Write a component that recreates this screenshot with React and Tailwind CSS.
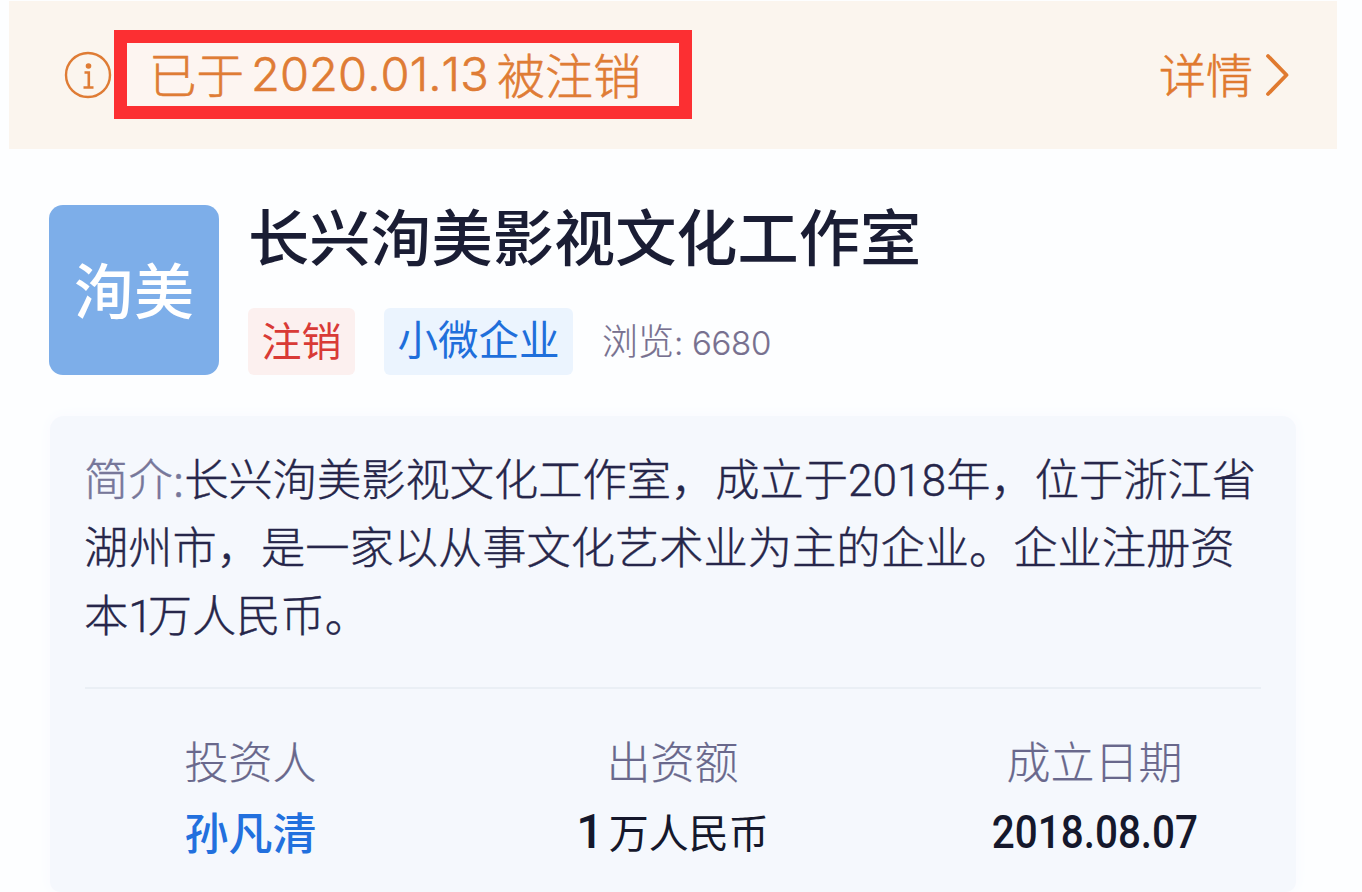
const InfoIcon = () => (
  <svg viewBox="0 0 48 48" fill="none" className="w-12 h-12 shrink-0 text-[#df7c35]">
    <circle cx="24" cy="24" r="22" stroke="currentColor" strokeWidth="2.4" />
    <circle cx="24.5" cy="15" r="2.8" fill="currentColor" />
    <path d="M20.5 21.5h4.3v15M19.5 36.5h10" stroke="currentColor" strokeWidth="2.6" />
  </svg>
);

const Banner = () => (
  <div className="mt-px ml-[9px] w-[1328px] h-[148px] bg-[#fbf5ee] flex items-center pl-[55px] pr-[46px]">
    <InfoIcon />
    <div className="ml-[2px] -mt-px w-[578px] h-[89px] border-[13px] border-[#fc2f32] bg-[#fdf5f1] flex items-center pl-[22px] text-[#df7c35] text-[49px] font-light whitespace-nowrap [-webkit-text-stroke:0.6px]">
      <span className="pb-[4px] text-[47.5px]">已于</span>
      <span className="ml-[7px] font-[Inter] text-[47px] tracking-[0.1px] [font-kerning:none] inline-block w-[246px]">
        2020.01.13
      </span>
      <span className="pb-[4px] text-[48px]">被注销</span>
    </div>
    <div className="ml-auto flex items-center text-[#e07a2f]">
      <span className="pb-[3px] text-[47px] font-light [-webkit-text-stroke:0.6px]">详情</span>
      <svg viewBox="0 0 26 44" fill="none" className="w-[26px] h-11 ml-3">
        <path d="M3 3l18.5 19L3 41" stroke="currentColor" strokeWidth="3.8" strokeLinecap="round" strokeLinejoin="round" />
      </svg>
    </div>
  </div>
);

const Header = () => (
  <div className="flex mt-14 ml-[49px]">
    <div className="w-[170px] h-[170px] pb-[4px] rounded-[14px] bg-[#7daee9] text-white text-[60px] font-medium flex items-center justify-center leading-none">
      洵美
    </div>
    <div className="ml-[29px] -mt-[3px]">
      <h1 className="text-[61.2px] leading-[66px] font-medium text-[#1a1d34] whitespace-nowrap">
        长兴洵美影视文化工作室
      </h1>
      <div className="mt-[40px] flex items-center h-[67px]">
        <span className="h-[67px] w-[107px] pb-[6px] rounded-md bg-[#fcf0ef] text-[#d93a36] text-[40px] flex items-center justify-center">
          注销
        </span>
        <span className="ml-[29px] h-[67px] w-[189px] pb-[6px] rounded-md bg-[#ebf4fe] text-[#1f6fdb] text-[40.5px] flex items-center justify-center">
          小微企业
        </span>
        <span className="ml-[29px] pb-[3px] text-[#77708f] text-[36px] font-light whitespace-nowrap [-webkit-text-stroke:0.2px]">
          浏览<span className="font-[Inter] text-[33px] tracking-[-0.3px]">: 6680</span>
        </span>
      </div>
    </div>
  </div>
);

const columns = [
  {
    label: '投资人',
    value: <span className="relative top-[2px] text-[#2270de] font-medium">孙凡清</span>,
  },
  {
    label: '出资额',
    value: (
      <span className="text-[#15182c] text-[40px]">
        <span className="font-[Roboto] font-medium text-[48px] leading-none mr-[5px]">1</span>万人民币
      </span>
    ),
  },
  {
    label: '成立日期',
    value: (
      <span className="inline-block scale-x-[0.86] font-[Roboto] font-medium text-[47px] text-[#15182c]">
        2018.08.07
      </span>
    ),
  },
];

const Summary = () => (
  <div className="mt-[41px] ml-[50px] w-[1246px] h-[476px] rounded-t-[14px] rounded-b-[10px] bg-[#f5f8fd] shadow-[0_0_16px_#f8fafe]">
    <p className="mx-[34px] pt-[27px] h-[235px] text-[44.25px] leading-[68px] font-light text-[#26264a] whitespace-nowrap [-webkit-text-stroke:0.4px]">
      <span className="text-[#77779a] tracking-[0.2px]">简介:</span>长兴洵美影视文化工作室，成立于
      <span className="font-[Roboto] leading-none">2018</span>年，位于浙江省
      <br />
      湖州市，是一家以从事文化艺术业为主的企业。企业注册资
      <br />
      本<span className="font-[Roboto] leading-none tracking-[-5px]">1</span>万人民币。
    </p>
    <div className="mt-[36px] mx-[35px] h-[2px] bg-[#eaeff5]" />
    <div className="-ml-[10px] -mr-[10px] mt-[37px] grid grid-cols-3 text-center text-[44px]">
      {columns.map((col) => (
        <div key={col.label} className="-ml-px">
          <div className="h-[68px] leading-[68px] font-light text-[#69688c] [-webkit-text-stroke:0.2px]">{col.label}</div>
          <div className="h-[76px] leading-[71px] whitespace-nowrap">{col.value}</div>
        </div>
      ))}
    </div>
  </div>
);

const App = () => {
  return (
    <div className='w-[1362px] h-[892px] overflow-hidden bg-[#fdfeff] flow-root font-["Noto_Sans_CJK_SC",sans-serif]'>
      <Banner />
      <Header />
      <Summary />
    </div>
  );
};

export default App;
